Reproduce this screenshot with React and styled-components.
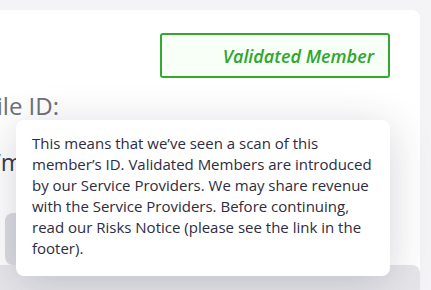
import styled, { createGlobalStyle } from "styled-components";

const GlobalStyle = createGlobalStyle`
  html, body {
    margin: 0;
    padding: 0;
    background: #f4f4f6;
    overflow: hidden;
  }
  body {
    font-family: "Open Sans", "Noto Sans", sans-serif;
  }
`;

const Page = styled.div`
  position: relative;
  width: 431px;
  height: 290px;
  overflow: hidden;
  padding-top: 10px;
  box-sizing: border-box;
`;

const Card = styled.div`
  margin-left: -60px;
  width: 480px;
  height: 300px;
  background: #ffffff;
  border-top-right-radius: 8px;
  padding: 23px 0 0 8px;
  box-sizing: border-box;
`;

const Header = styled.div`
  display: flex;
  justify-content: flex-end;
  padding-right: 30px;
`;

const Badge = styled.div`
  width: 230px;
  height: 45px;
  box-sizing: border-box;
  border: 2px solid #33aa2f;
  border-radius: 3px;
  background: #f7fff6;
  display: flex;
  align-items: center;
  justify-content: flex-end;
  padding-right: 14px;
  color: #2fa62c;
  font-style: italic;
  font-weight: 600;
  font-size: 18px;
`;

const InfoLine = styled.div`
  display: flex;
  align-items: center;
  gap: 6px;
  margin-top: ${(p) => p.$top}px;
  margin-left: ${(p) => p.$left}px;
  color: ${(p) => p.$color};
  font-size: 24px;
  height: 28px;
  white-space: nowrap;
`;

const Redacted = styled.span`
  display: inline-block;
  width: 105px;
  height: 27px;
  background: #ffffff;
`;

const GreyBlock = styled.div`
  margin-top: ${(p) => p.$top}px;
  margin-left: ${(p) => p.$left}px;
  width: ${(p) => p.$width}px;
  height: ${(p) => p.$height}px;
  background: ${(p) => p.$bg};
  border-radius: 8px;
`;

const Tooltip = styled.div`
  position: absolute;
  left: 16px;
  top: 120px;
  width: 374px;
  height: 156px;
  box-sizing: border-box;
  padding: 13px 10px 0 16px;
  background: #ffffff;
  border-radius: 8px;
  box-shadow: 0 8px 44px rgba(40, 40, 70, 0.2);
  color: #2e2c40;
  font-size: 15px;
  line-height: 21px;
  white-space: nowrap;
`;

export default function App() {
  return (
    <>
      <GlobalStyle />
      <Page>
        <Card>
          <Header>
            <Badge>Validated Member</Badge>
          </Header>
          <InfoLine $top={13} $left={2} $color="#707078">
            Profile ID: <Redacted />
          </InfoLine>
          <InfoLine $top={28} $left={42} $color="#3a3a48">
            I’m
          </InfoLine>
          <GreyBlock $top={38} $left={57} $width={320} $height={52} $bg="#dcdce2" />
          <GreyBlock $top={0} $left={40} $width={432} $height={40} $bg="#e6e6ea" />
        </Card>
        <Tooltip>
          This means that we’ve seen a scan of this
          <br />
          member’s ID. Validated Members are introduced
          <br />
          by our Service Providers. We may share revenue
          <br />
          with the Service Providers. Before continuing,
          <br />
          read our Risks Notice (please see the link in the
          <br />
          footer).
        </Tooltip>
      </Page>
    </>
  );
}
